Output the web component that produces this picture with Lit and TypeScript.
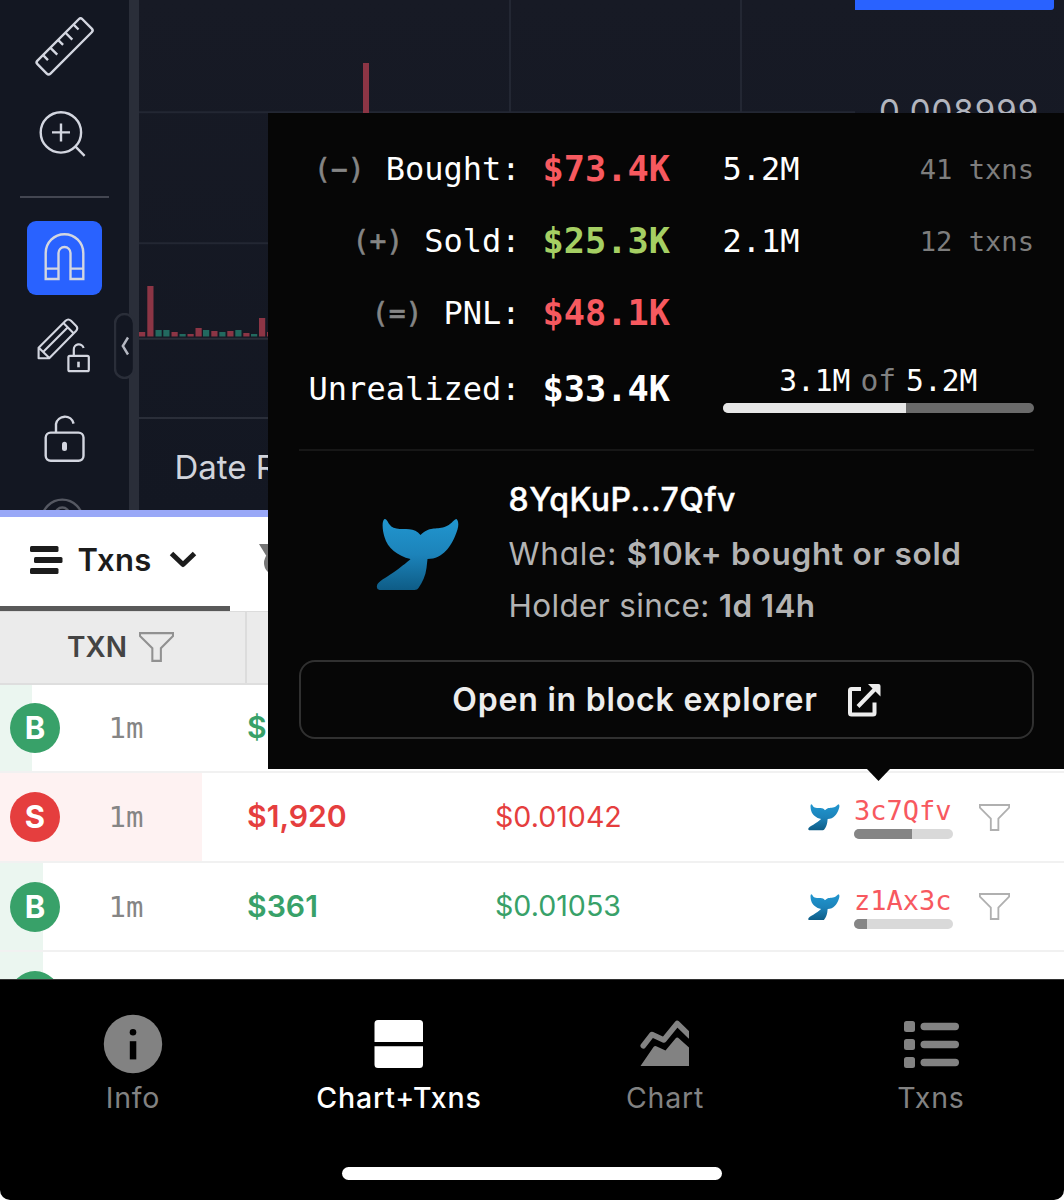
import { LitElement, html, svg, css } from "lit";
import { customElement, property } from "lit/decorators.js";
import { classMap } from "lit/directives/class-map.js";
import { styleMap } from "lit/directives/style-map.js";

type Side = "buy" | "sell";
interface Txn {
  side: Side;
  age?: string;
  amount?: string;
  price?: string;
  wallet?: string;
  held?: number;
  size: number;
}

const TXNS: Txn[] = [
  { side: "buy", age: "1m", amount: "$", size: 32 },
  { side: "sell", age: "1m", amount: "$1,920", price: "$0.01042", wallet: "3c7Qfv", held: 59, size: 202 },
  { side: "buy", age: "1m", amount: "$361", price: "$0.01053", wallet: "z1Ax3c", held: 13.5, size: 42.5 },
  { side: "buy", size: 42.5 },
];

// Volume bars: left edge, top edge, rising flag
const BARS: [number, number, boolean][] = [
  [139, 332, false], [147.3, 286, false], [155.5, 330, true], [163.3, 330, true],
  [171.5, 332, false], [179.5, 334, true], [187.5, 334, false], [195.5, 328, false],
  [203, 330, true], [211.3, 331, false], [219.3, 332, true], [227.3, 331, false],
  [235.3, 330, true], [243.3, 333, false], [251, 334, true], [259, 318, false], [267, 332, false],
];

const funnel = html`<svg class="funnel" viewBox="0 0 32 27" preserveAspectRatio="none">
  <path d="M.9 1H31.1V3.6L20 14.6V26H12.2V14.6L.9 3.6Z" fill="none" stroke="currentColor" stroke-width="1.9" />
</svg>`;

@customElement("whale-tail")
export class WhaleTail extends LitElement {
  static styles = css`
    :host { display: block; }
    svg { display: block; width: 100%; height: 100%; }
  `;
  render() {
    return html`<svg viewBox="376.5 518 82.5 72.5" preserveAspectRatio="none">
      <defs><linearGradient id="g" x1="0" y1="0" x2="0" y2="1">
        <stop offset="0" stop-color="#2196cf" /><stop offset=".5" stop-color="#1c83ba" /><stop offset="1" stop-color="#0e5c86" />
      </linearGradient></defs>
      <path fill="url(#g)" d="M385 519C389 519 388 527 397 528.5C405 530 415 527 421 535C430 526 436 530 445 527C452 525 453 520 457 519C460 522 459 528 456 535C452 545 444 559 428 559L427 568C426 576 423 582 419 588Q418 590 415 590L380 590Q376 589 378 584C382 579 388 577 396 571C404 565 408 562 411 559C398 556 388 548 385 537C383 531 382 521 385 519Z" />
    </svg>`;
  }
}

@customElement("holding-bar")
export class HoldingBar extends LitElement {
  @property({ type: Number }) value = 0;
  static styles = css`
    :host { display: block; height: 10px; border-radius: 5px; overflow: hidden; background: var(--track); }
    .fill { height: 100%; background: var(--fill); }
  `;
  render() {
    return html`<div class="fill" style=${styleMap({ width: `${this.value}%` })}></div>`;
  }
}

@customElement("tool-bar")
export class ToolBar extends LitElement {
  static styles = css`
    :host { display: flex; flex-direction: column; position: relative; width: 129px; height: 510px; background: #131722; border-right: 10px solid #2a2e39; box-sizing: content-box; }
    svg { display: block; width: 129px; fill: none; stroke: #d3d6e0; stroke-width: 2.4; flex: none; }
    .ruler { height: 70px; margin-top: 10px; }
    .zoom { height: 60px; margin-top: 25px; }
    .rule { height: 2px; width: 89px; margin: 31px 0 0 20px; background: #434651; flex: none; }
    .magnet { width: 75px; height: 74px; margin: 23px 0 0 27px; border-radius: 9px; background: #2962ff; }
    .pencil { height: 70px; margin-top: 15px; }
    .lock { height: 60px; margin-top: 25px; }
    .eye { height: 20px; margin-top: 25px; stroke: #555862; }
    .handle { position: absolute; left: 114px; top: 313px; width: 21px; height: 66px; }
  `;
  render() {
    return html`
      <svg class="ruler" viewBox="0 10 129 70">
        <g transform="translate(64.6 46.4) rotate(-45)">
          <rect x="-31.8" y="-9.2" width="63.6" height="18.4" rx="2.6" />
          <path d="M-21.4-9V-2.1M-11-9V.6M0-9V-2.1M10.3-9V.6M21.8-9V-2.1" />
        </g>
      </svg>
      <svg class="zoom" viewBox="0 105 129 60">
        <circle cx="60.9" cy="132.4" r="20.2" /><path d="M52 132.4H70M61 123.5V141.5M75.3 146.3L84.6 155.8" />
      </svg>
      <div class="rule"></div>
      <svg class="magnet" viewBox="27 221 75 74">
        <path d="M45.7 279V253A18.8 18.8 0 0 1 83.3 253V279H70.5V253A6 6 0 0 0 58.5 253V279ZM45.7 268.6H58.6M70.3 268.6H83.6" />
      </svg>
      <svg class="pencil" viewBox="0 310 129 70">
        <path stroke-width="2.1" stroke-linejoin="round" d="M38.6 358.3V347.7L65.6 320.8Q68.3 318.2 71 320.8L76 325.8Q78.5 328.2 76 331L49.2 358.3ZM63.4 323L73.8 333.4M38.6 347.4L49.6 358.2M43.6 351.6L67.6 327.6" />
        <rect x="68.4" y="355.8" width="20.4" height="15.4" rx="1.5" stroke-width="2.2" /><path stroke-width="2.2" d="M73.8 355.6V349.6A5 5 0 0 1 83.6 348" />
        <path stroke-width="2.6" d="M78.5 361.7V367.3" />
      </svg>
      <svg class="lock" viewBox="0 405 129 60">
        <rect x="45.7" y="432.6" width="37.8" height="28.2" rx="5" /><path d="M56 432.5V424A9 9 0 0 1 73.6 423.6" />
        <path stroke-width="5" stroke-linecap="round" d="M64.5 444.2V448.6" />
      </svg>
      <svg class="eye" viewBox="0 490 129 20"><circle cx="62.3" cy="520" r="20.4" /><circle cx="62.3" cy="514.5" r="7" /></svg>
      <svg class="handle" viewBox="0 0 21 66">
        <rect x="1" y="1" width="19" height="64" rx="9.5" fill="#131722" stroke="#2a2e39" />
        <path d="M14 24.5L8.8 33L14 41.5" stroke="#b4b7c1" />
      </svg>`;
  }
}

@customElement("price-chart")
export class PriceChart extends LitElement {
  static styles = css`
    :host { display: block; }
    svg { display: block; width: 925px; height: 510px; background: linear-gradient(#171a25, #131722); font-family: Inter, "Liberation Sans", sans-serif; }
  `;
  render() {
    return html`<svg viewBox="139 0 925 510">
      <path d="M139 112.3H855M139 243.3H855M510 0V339M741 0V339" stroke="#232733" stroke-width="2" />
      <path d="M139 338.8H1064M139 418H1064" stroke="#2a2e39" stroke-width="2" />
      ${BARS.map(([x, y, up]) => svg`<rect x=${x} y=${y} width="6.2" height=${336.5 - y} fill=${up ? "#22695f" : "#8c3545"} />`)}
      <rect x="363" y="63" width="6" height="273" fill="#8c3545" />
      <path d="M855 0H1054V7Q1054 10 1051 10H855Z" fill="#2962ff" />
      <text x="879" y="122.8" font-size="33" letter-spacing="1" fill="#b2b5be">0.008999</text>
      <text x="174.5" y="478.5" font-size="33" fill="#d1d4dc">Date Range</text>
    </svg>`;
  }
}

@customElement("wallet-popup")
export class WalletPopup extends LitElement {
  static styles = css`
    :host { display: block; box-sizing: border-box; width: 796px; height: 656px; padding: 0 30px 0 31px; background: #060606; color: #fff; font-family: "DejaVu Sans Mono", monospace; font-size: 32px; }
    .stats { display: grid; grid-template-columns: 221.5px 22px 180px 1fr auto; grid-template-rows: 72px 72px 72px 80px; align-items: center; padding-top: 20px; height: 316px; box-sizing: border-box; white-space: nowrap; line-height: 40px; }
    .label { grid-column: 1; display: flex; justify-content: flex-end; align-items: center; gap: 21px; }
    .op { color: #858585; font-size: 28px; padding-top: 2px; -webkit-text-stroke: 0.6px #858585; }
    .value { grid-column: 3; font-size: 35.3px; font-weight: 700; }
    .neg { color: #f7595f; }
    .pos { color: #a5cf63; }
    .count { grid-column: 5; font-size: 27.1px; color: #7d7d7d; padding-top: 2px; }
    .held { grid-column: 4 / 6; margin-bottom: 2px; }
    .of { display: flex; justify-content: center; gap: 10px; font-size: 29.6px; line-height: 36px; margin-bottom: 4px; }
    .of span { color: #808080; }
    holding-bar { --track: #6a6a6a; --fill: #e6e6e6; }
    .who { display: flex; margin-top: 20px; border-top: 2px solid #171717; height: 210px; box-sizing: border-box; font-family: Inter, sans-serif; font-feature-settings: "cv11"; white-space: nowrap; }
    whale-tail { width: 82.5px; height: 72.5px; margin: 67px 50px 0 77px; flex: none; }
    .info { padding-top: 22px; font-size: 31.5px; line-height: 52px; letter-spacing: 0.75px; color: #b3b3b3; }
    .name { font-size: 32px; line-height: 54px; font-weight: 500; letter-spacing: 0.5px; color: #fff; -webkit-text-stroke: 0.4px #fff; }
    .line { position: relative; top: 0.5px; }
    .since { letter-spacing: 0.35px; }
    .info b { font-weight: 600; }
    .open { display: flex; justify-content: center; align-items: center; gap: 29px; width: 735px; height: 79px; box-sizing: border-box; margin: 1px 0 0; border: 2px solid #303030; border-radius: 16px; background: none; color: #ededed; font: 600 32px Inter, sans-serif; letter-spacing: 0.8px; font-feature-settings: "cv11"; padding: 0; }
    .open svg { width: 34px; height: 34px; fill: none; stroke: currentColor; stroke-width: 4; }
  `;
  render() {
    return html`
      <div class="stats">
        <div class="label"><span class="op">(−)</span>Bought:</div><div class="value neg">$73.4K</div><div class="amount">5.2M</div><div class="count">41 txns</div>
        <div class="label"><span class="op">(+)</span>Sold:</div><div class="value pos">$25.3K</div><div class="amount">2.1M</div><div class="count">12 txns</div>
        <div class="label"><span class="op">(=)</span>PNL:</div><div class="value neg">$48.1K</div>
        <div class="label">Unrealized:</div><div class="value">$33.4K</div>
        <div class="held">
          <div class="of">3.1M<span>of</span>5.2M</div>
          <holding-bar .value=${59}></holding-bar>
        </div>
      </div>
      <div class="who">
        <whale-tail></whale-tail>
        <div class="info">
          <div class="name">8YqKuP...7Qfv</div>
          <div class="line">Whale: <b>$10k+ bought or sold</b></div>
          <div class="line since">Holder since: <b>1d 14h</b></div>
        </div>
      </div>
      <button class="open"><span class="cta">Open in block explorer</span>
        <svg viewBox="0 0 34 34"><path d="M14 6H4.5Q3 6 3 7.5V30Q3 31.5 4.5 31.5H26Q27.5 31.5 27.5 30V19.5M11 23.5L28 6" /><path d="M21 1H31.5Q33.5 1 33.5 3V13.5Z" fill="currentColor" stroke="none" /></svg>
      </button>`;
  }
}

@customElement("bottom-nav")
export class BottomNav extends LitElement {
  static styles = css`
    :host { display: block; height: 221px; box-sizing: border-box; background: #000; border-top: 1px solid #333; border-radius: 0 0 10px 10px; }
    nav { display: grid; grid-template-columns: repeat(4, 1fr); height: 187px; }
    .item { display: flex; flex-direction: column; align-items: center; padding-top: 34px; color: #828282; font: 400 28.5px/34px Inter, sans-serif; letter-spacing: 0.8px; }
    .on { color: #fff; font-weight: 500; }
    svg { display: block; width: 60px; height: 60px; fill: currentColor; margin: 0 0 7px 0.4px; }
    .home { width: 380px; height: 13px; border-radius: 7px; background: #fff; margin: 0 auto; }
  `;
  render() {
    return html`<nav>
        <div class="item"><svg viewBox="0 0 60 60"><circle cx="30" cy="30" r="29.2" /><circle cx="30" cy="18.3" r="3.3" fill="#000" /><path d="M26.8 27.2H33.3V45.4H26.8Z" fill="#000" /></svg>Info</div>
        <div class="item on"><svg viewBox="0 0 60 60"><path d="M5.5 28V9.5Q5.5 6 9 6H50.5Q54 6 54 9.5V28ZM5.5 32.2H54V50.5Q54 54 50.5 54H9Q5.5 54 5.5 50.5Z" /></svg>Chart+Txns</div>
        <div class="item"><svg viewBox="0 0 60 60"><path d="M5.5 52L18.5 33Q20 31.5 21.8 32.5L30.5 36.5L40.5 24.5Q42.2 22.5 44 24.5L54 33.5V52Z" /><path d="M8.3 31.8L17 20.5L28.8 26L42.2 9.5L55 22" fill="none" stroke="currentColor" stroke-width="5.6" stroke-linecap="round" stroke-linejoin="round" /><path d="M54 0H60V60H54Z" fill="#000" /></svg>Chart</div>
        <div class="item"><svg viewBox="0 0 60 60">${[12.5, 30.5, 48.5].map((y) => svg`<rect x="3" y=${y - 5.5} width="11" height="11" rx="2.5" /><rect x="19.5" y=${y - 3.7} width="38.5" height="7.4" rx="3.7" />`)}</svg>Txns</div>
      </nav>
      <div class="home"></div>`;
  }
}

@customElement("app-root")
export class AppRoot extends LitElement {
  static styles = css`
    :host { display: block; position: relative; width: 1064px; height: 1200px; overflow: hidden; background: #fff; font-family: Inter, "Liberation Sans", sans-serif; }
    .top { display: flex; height: 510px; }
    .accent { height: 7px; background: #99a8f7; }
    .tabs { display: flex; height: 94px; }
    .tab { display: flex; align-items: center; box-sizing: border-box; width: 229.5px; padding: 0 0 4px 29.5px; border-bottom: 5px solid #595959; color: #1c1c1c; font-size: 31px; font-weight: 600; line-height: 36px; letter-spacing: 0.3px; }
    .tab .menu { width: 33px; height: 28px; margin-right: 15px; fill: currentColor; }
    .tab .chev { width: 28px; height: 18px; margin-left: 17px; fill: none; stroke: currentColor; stroke-width: 5; stroke-linejoin: round; }
    .medal { width: 34px; height: 34px; margin: 26px 0 0 29px; fill: #757575; }
    .head { display: flex; height: 74px; box-sizing: border-box; background: #ebebeb; border-top: 1.5px solid #dcdcdc; border-bottom: 2px solid #dedede; }
    .col { display: flex; align-items: center; gap: 12px; width: 247px; box-sizing: border-box; padding: 0 0 2px 67px; border-right: 2px solid #dcdcdc; font-size: 28px; font-weight: 600; color: #444; }
    .funnel { display: block; }
    .col .funnel { width: 35px; height: 30px; color: #919191; }
    .rows { height: 294px; overflow: hidden; }
    .row { display: grid; grid-template-columns: 108.5px 138.5px 248px 313px 46px 125px 1fr; align-items: center; height: 89.5px; box-sizing: border-box; border-bottom: 2.5px solid #f1f1f1; padding-top: 1px; position: relative; white-space: nowrap; }
    .row:first-child { height: 88px; padding-top: 0; }
    .size { position: absolute; left: 0; top: 0; bottom: 0; background: #ebf6f0; }
    .sell .size { background: #fef2f2; }
    .badge { position: relative; width: 50px; height: 50px; margin-left: 10px; border-radius: 50%; background: #38a169; color: #fff; font-size: 31px; font-weight: 700; line-height: 50px; text-align: center; }
    .sell .badge { background: #e53e3e; }
    .age { position: relative; font-family: "DejaVu Sans Mono", monospace; font-size: 29px; color: #858585; }
    .amount, .price { margin-bottom: 2px; }
    .amount { font-size: 30.2px; font-weight: 600; color: #38a169; }
    .price { font-size: 28.6px; color: #38a169; }
    .sell .amount, .sell .price { color: #e53e3e; }
    .small { width: 31.5px; height: 26.5px; }
    .wallet { width: 99px; font-family: "DejaVu Sans Mono", monospace; font-size: 27px; line-height: 32px; color: #f7595f; }
    .wallet holding-bar { margin-top: 2px; --track: #d9d9d9; --fill: #858585; }
    .row .funnel { width: 31px; height: 27px; color: #b0b0b0; }
    wallet-popup { position: absolute; left: 268px; top: 113px; }
    .arrow { position: absolute; left: 867px; top: 769px; width: 23px; height: 12px; background: #060606; clip-path: polygon(0 0, 100% 0, 50% 100%); }
  `;

  private row(t: Txn) {
    return html`<div class=${classMap({ row: true, sell: t.side === "sell" })}>
      <div class="size" style=${styleMap({ width: `${t.size}px` })}></div>
      <div class="badge">${t.age ? (t.side === "sell" ? "S" : "B") : null}</div>
      <div class="age">${t.age}</div>
      <div class="amount">${t.amount}</div>
      <div class="price">${t.price}</div>
      ${t.wallet
        ? html`<whale-tail class="small"></whale-tail>
            <div class="wallet">${t.wallet}<holding-bar .value=${t.held ?? 0}></holding-bar></div>
            ${funnel}`
        : null}
    </div>`;
  }

  render() {
    return html`
      <div class="top"><tool-bar></tool-bar><price-chart></price-chart></div>
      <div class="accent"></div>
      <div class="tabs">
        <div class="tab">
          <svg class="menu" viewBox="0 0 33 28"><rect width="28.5" height="6" rx="1.5" /><rect x="4" y="11" width="28.5" height="6" rx="1.5" /><rect y="22" width="28.5" height="6" rx="1.5" /></svg>
          <span class="tabname">Txns</span>
          <svg class="chev" viewBox="0 0 28 18"><path d="M2.5 2.5L14 13.5L25.5 2.5" /></svg>
        </div>
        <svg class="medal" viewBox="0 0 34 34"><path d="M0 1H10L17 12L24 1H34L24 14H8Z" /><circle cx="17" cy="20" r="12" /></svg>
      </div>
      <div class="head"><div class="col"><span>TXN</span>${funnel}</div></div>
      <div class="rows">${TXNS.map((t) => this.row(t))}</div>
      <bottom-nav></bottom-nav>
      <wallet-popup></wallet-popup>
      <div class="arrow"></div>
    `;
  }
}
